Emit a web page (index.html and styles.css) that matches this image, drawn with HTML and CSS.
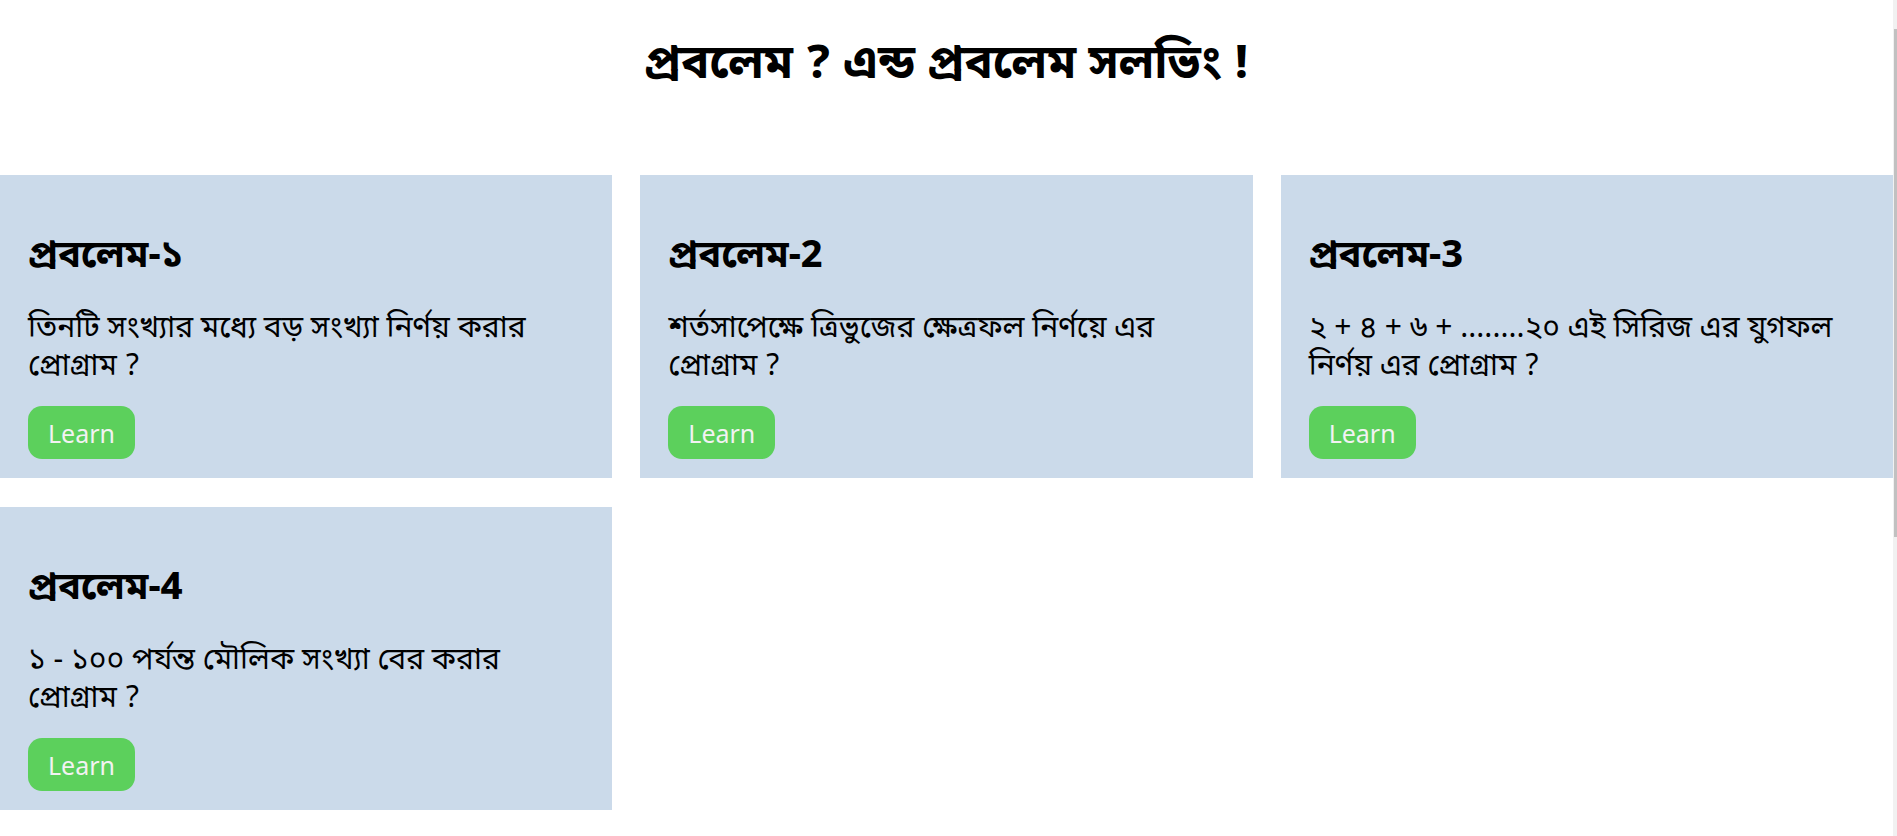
FILE: index.html
```html
<!DOCTYPE html>
<html lang="bn">
<head>
<meta charset="utf-8">
<title>প্রবলেম</title>
<link rel="stylesheet" href="styles.css">
</head>
<body>
<div class="page">
  <h1 class="page-title">প্রবলেম ? এন্ড প্রবলেম সলভিং !</h1>
  <main class="grid">
    <section class="card">
      <h2 class="card-title">প্রবলেম-১</h2>
      <p class="card-text">তিনটি সংখ্যার মধ্যে বড় সংখ্যা নির্ণয় করার প্রোগ্রাম ?</p>
      <button class="learn">Learn</button>
    </section>
    <section class="card">
      <h2 class="card-title">প্রবলেম-2</h2>
      <p class="card-text">শর্তসাপেক্ষে ত্রিভুজের ক্ষেত্রফল নির্ণয়ে এর প্রোগ্রাম ?</p>
      <button class="learn">Learn</button>
    </section>
    <section class="card">
      <h2 class="card-title">প্রবলেম-3</h2>
      <p class="card-text">২ + ৪ + ৬ + ........২০ এই সিরিজ এর যুগফল নির্ণয় এর প্রোগ্রাম ?</p>
      <button class="learn">Learn</button>
    </section>
    <section class="card">
      <h2 class="card-title">প্রবলেম-4</h2>
      <p class="card-text">১ - ১০০ পর্যন্ত মৌলিক সংখ্যা বের করার প্রোগ্রাম ?</p>
      <button class="learn">Learn</button>
    </section>
  </main>
  <div class="spacer"></div>
</div>
<div class="scrollbar"><div class="scrollbar-thumb"></div></div>
</body>
</html>
```

FILE: styles.css
```css
body {
  margin: 0;
  background: #ffffff;
  color: #000000;
  font-family: "Vrinda", "Noto Sans Bengali", "Noto Serif Bengali", "Lohit Bengali", "FreeSerif", "Noto Sans", sans-serif;
}

.page {
  margin-right: 4px;
}

.page-title {
  margin: 0;
  padding: 38px 0 0;
  height: 175px;
  box-sizing: border-box;
  text-align: center;
  font-size: 47px;
  line-height: 56px;
  font-weight: 700;
}

.grid {
  display: grid;
  grid-template-columns: repeat(3, 1fr);
  gap: 29px 28px;
}

.card {
  background: #cbdaea;
  height: 303px;
  box-sizing: border-box;
  padding: 61px 28px 19px;
  display: flex;
  flex-direction: column;
  align-items: flex-start;
}

.card-title {
  margin: 0 0 30px;
  font-size: 38px;
  line-height: 44px;
  font-weight: 700;
}

.card-text {
  margin: 0 0 19px;
  font-size: 30px;
  line-height: 38px;
}

.learn {
  margin-top: auto;
  width: 107px;
  height: 53px;
  flex-shrink: 0;
  border: none;
  border-radius: 14px;
  background: #5cd05c;
  color: #f2f2f2;
  font-family: "Noto Sans", "Open Sans", sans-serif;
  font-size: 25px;
  padding: 0;
}

.spacer { height: 520px; }

.scrollbar {
  position: fixed;
  top: 0;
  right: 0;
  bottom: 0;
  width: 4px;
  background: #f1f1f1;
}

.scrollbar-thumb {
  margin-top: 29px;
  margin-left: 1px;
  height: 508px;
  background: #c1c1c1;
}
```
